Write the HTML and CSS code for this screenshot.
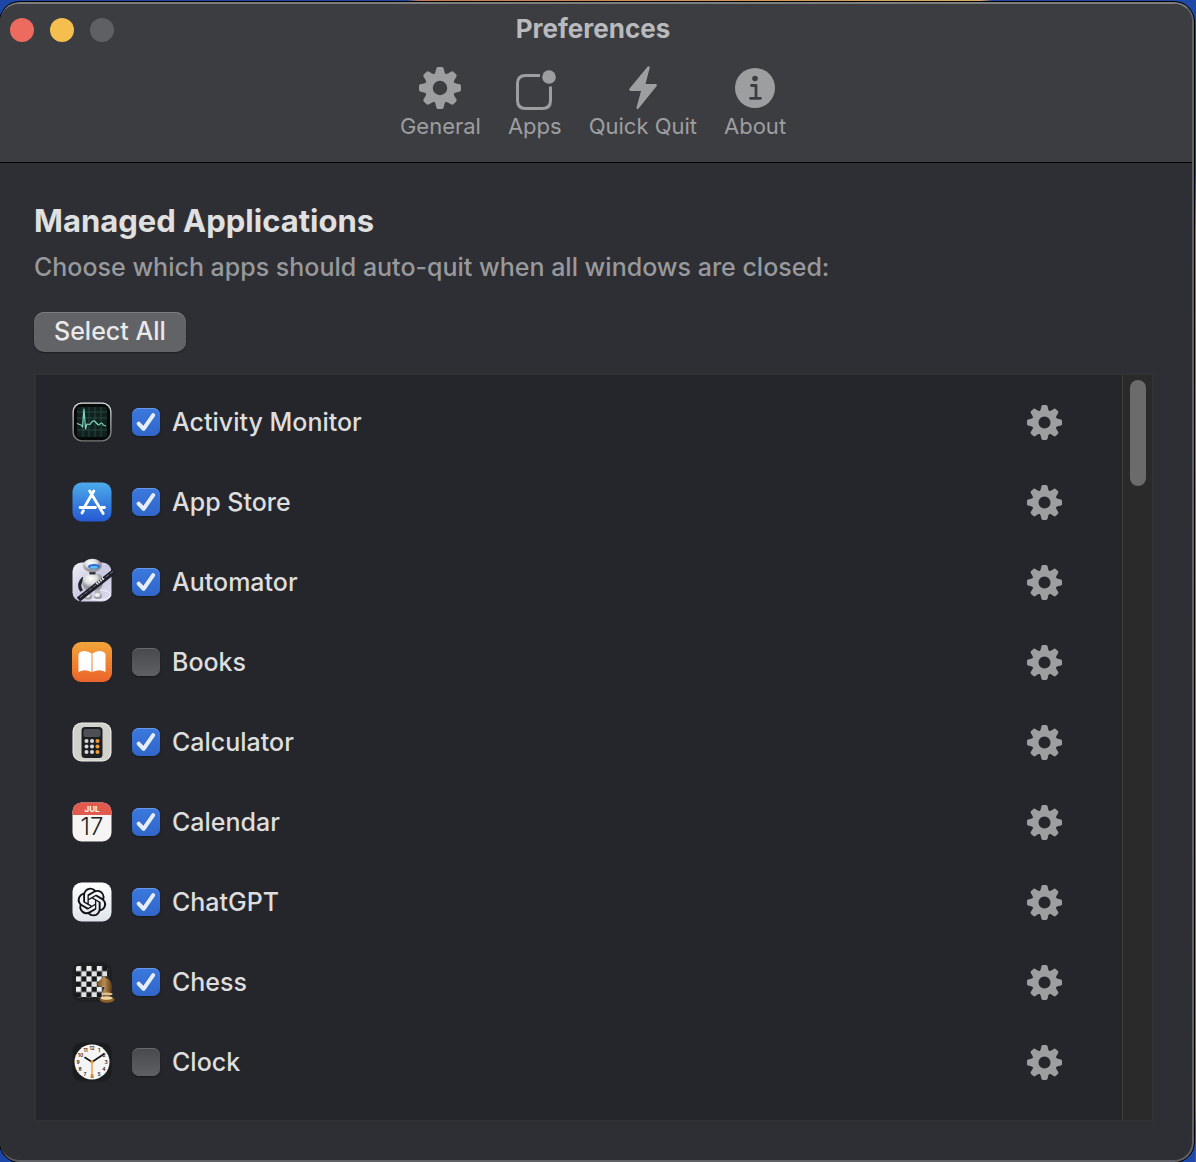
FILE: index.html
```html
<!DOCTYPE html>
<html lang="en">
<head>
    <meta charset="UTF-8">
    <meta name="viewport" content="width=device-width, initial-scale=1.0">
    <title>Preferences</title>
    <link rel="stylesheet" href="styles.css">
</head>
<body>
    <!-- shared shapes -->
    <svg class="defs" width="0" height="0" aria-hidden="true">
        <defs>
            <path id="tooth" d="M13.5 8C15.6 6.5 15.8 4.5 16.3 2.2C16.7 .6 17.2 0 18.4 0H21.6C22.8 0 23.3 .6 23.7 2.2C24.2 4.5 24.4 6.5 26.5 8Z"/>
        </defs>
        <symbol id="gear" viewBox="0 0 40 40">
            <circle cx="20" cy="20" r="10.6" fill="none" stroke="currentColor" stroke-width="7.4"/>
            <g fill="currentColor">
                <use href="#tooth"/>
                <use href="#tooth" transform="rotate(45 20 20)"/>
                <use href="#tooth" transform="rotate(90 20 20)"/>
                <use href="#tooth" transform="rotate(135 20 20)"/>
                <use href="#tooth" transform="rotate(180 20 20)"/>
                <use href="#tooth" transform="rotate(225 20 20)"/>
                <use href="#tooth" transform="rotate(270 20 20)"/>
                <use href="#tooth" transform="rotate(315 20 20)"/>
            </g>
        </symbol>
        <symbol id="check" viewBox="0 0 28 28">
            <path d="M6.6 15.6L11.6 20.8L21.2 7.2" fill="none" stroke="#e8effb" stroke-width="4" stroke-linecap="round" stroke-linejoin="round"/>
        </symbol>
    </svg>

    <div class="window">
        <header class="header">
            <div class="titlebar">
                <div class="lights">
                    <button type="button" class="light close" aria-label="Close"></button>
                    <button type="button" class="light minimize" aria-label="Minimize"></button>
                    <button type="button" class="light zoom" aria-label="Zoom" disabled></button>
                </div>
                <h1 class="title">Preferences</h1>
            </div>
            <nav class="toolbar">
                <button type="button" class="tab">
                    <svg class="tab-icon" viewBox="0 0 44 44"><use href="#gear" x="1" y="1" width="42" height="42"/></svg>
                    <span>General</span>
                </button>
                <button type="button" class="tab">
                    <svg class="tab-icon" viewBox="0 0 44 44">
                        <path d="M27 9.5H12.5Q4.500 9.500 4.500 17.500V34.500Q4.500 42.500 12.500 42.500H29.500Q37.500 42.500 37.500 34.500V20.500" fill="none" stroke="currentColor" stroke-width="3"/>
                        <circle cx="36" cy="11" r="6.800" fill="currentColor"/>
                    </svg>
                    <span>Apps</span>
                </button>
                <button type="button" class="tab">
                    <svg class="tab-icon" viewBox="0 0 44 44">
                        <path d="M26.500 .8Q28.500 -.6 28.800 1.500L24.500 18H34.500Q36.800 18.200 35.500 20.300L17.500 42.500Q15.600 44.200 15.500 41.800L20 25H9.500Q7.400 24.600 8.600 22.600Z" fill="currentColor"/>
                    </svg>
                    <span>Quick Quit</span>
                </button>
                <button type="button" class="tab">
                    <svg class="tab-icon" viewBox="0 0 44 44">
                        <circle cx="22" cy="22" r="20" fill="currentColor"/>
                        <circle cx="22" cy="12.500" r="2.800" fill="#3c3d40"/>
                        <path d="M18.500 19.500H23V32M17.500 32.300H27.500" fill="none" stroke="#3c3d40" stroke-width="2.800" stroke-linecap="round" stroke-linejoin="round"/>
                    </svg>
                    <span>About</span>
                </button>
            </nav>
        </header>

        <main class="content">
            <h2>Managed Applications</h2>
            <p class="hint">Choose which apps should auto-quit when all windows are closed:</p>
            <button type="button" class="select-all">Select All</button>

            <div class="list-box">
                <ul class="app-list">
                    <li class="app">
                        <svg class="app-icon" viewBox="0 0 40 40">
                            <defs>
                                <linearGradient id="rim" x2="0" y2="1"><stop stop-color="#e4eced"/><stop offset="1" stop-color="#777"/></linearGradient>
                            </defs>
                            <rect x=".5" y=".5" width="39" height="39" rx="9" fill="url(#rim)"/>
                            <rect x="1.800" y="1.800" width="36.400" height="36.400" rx="8" fill="#070909"/>
                            <rect x="5" y="5" width="30" height="30" rx="2" fill="#10211f"/>
                            <path d="M5 10H35M5 16H35M5 28H35M11 5V35M17 5V35M23 5V35M29 5V35" stroke="#2c5148" stroke-width=".8"/>
                            <path d="M5 21.500L9 23L10.500 25L12 7L13.500 27L15 22L18 22.500Q21 17 23.500 20T27 23Q30 19 31 23L34 24" fill="none" stroke="#7fd5bd" stroke-width="1.200" stroke-linejoin="round"/>
                        </svg>
                        <span class="box"><input type="checkbox" id="activity-monitor" checked><svg class="tick"><use href="#check"/></svg></span>
                        <label for="activity-monitor">Activity Monitor</label>
                        <button type="button" class="options" aria-label="Activity Monitor options"><svg viewBox="0 0 40 40"><use href="#gear"/></svg></button>
                    </li>
                    <li class="app">
                        <svg class="app-icon" viewBox="0 0 40 40">
                            <defs>
                                <linearGradient id="store" x2="0" y2="1"><stop stop-color="#4cabea"/><stop offset="1" stop-color="#2559d3"/></linearGradient>
                            </defs>
                            <rect x=".5" y=".5" width="39" height="39" rx="9" fill="url(#store)"/>
                            <path d="M21.800 9L12.500 25M17.700 9L31.200 31.500M8 25.500H23.500M28.500 25.500H32.500M11.300 28.800L10 31" fill="none" stroke="#fff" stroke-width="2.800" stroke-linecap="round"/>
                        </svg>
                        <span class="box"><input type="checkbox" id="app-store" checked><svg class="tick"><use href="#check"/></svg></span>
                        <label for="app-store">App Store</label>
                        <button type="button" class="options" aria-label="App Store options"><svg viewBox="0 0 40 40"><use href="#gear"/></svg></button>
                    </li>
                    <li class="app">
                        <svg class="app-icon" viewBox="0 0 40 40">
                            <defs>
                                <linearGradient id="auto" x2="1" y2="1"><stop stop-color="#f1f1f8"/><stop offset=".5" stop-color="#c9c9e4"/><stop offset="1" stop-color="#dcdcf0"/></linearGradient>
                                <radialGradient id="robot" cx=".4" cy=".3"><stop stop-color="#fff"/><stop offset=".6" stop-color="#dcdde0"/><stop offset="1" stop-color="#96989e"/></radialGradient>
                            </defs>
                            <rect x=".5" y=".5" width="39" height="39" rx="9" fill="url(#auto)"/>
                            <ellipse cx="27" cy="33" rx="12" ry="5" fill="none" stroke="#f4f4ff"/>
                            <path d="M11.500 16Q5 22 9.500 29" fill="none" stroke="#24262d" stroke-width="3.200"/>
                            <path d="M16 26L15 33M25 26L26 33" stroke="#b5b7bd" stroke-width="5.500"/>
                            <ellipse cx="16" cy="34.500" rx="4" ry="3" fill="url(#robot)"/>
                            <ellipse cx="26" cy="34" rx="4" ry="3" fill="url(#robot)"/>
                            <rect x="10.500" y="11.500" width="20.500" height="17" rx="7" fill="url(#robot)"/>
                            <rect x="17.500" y="9" width="6" height="3.500" fill="#303238"/>
                            <ellipse cx="20.500" cy="3.500" rx="9.500" ry="6.800" fill="url(#robot)"/>
                            <ellipse cx="22" cy="4.500" rx="6" ry="2.600" fill="#2d6ccb"/>
                            <ellipse cx="22" cy="5.300" rx="4" ry="1.400" fill="#5fc1ff"/>
                            <path d="M6.500 37.500L42 9.500" stroke="#1e1f27" stroke-width="5.400"/>
                            <path d="M8 35.500L41 9.500" stroke="#7e8196" stroke-width="1" stroke-dasharray="4 1.500"/>
                            <path d="M24.500 22L32 15.500" stroke="#e7e8eb" stroke-width="2.800" stroke-dasharray="1.500 1"/>
                        </svg>
                        <span class="box"><input type="checkbox" id="automator" checked><svg class="tick"><use href="#check"/></svg></span>
                        <label for="automator">Automator</label>
                        <button type="button" class="options" aria-label="Automator options"><svg viewBox="0 0 40 40"><use href="#gear"/></svg></button>
                    </li>
                    <li class="app">
                        <svg class="app-icon" viewBox="0 0 40 40">
                            <defs>
                                <linearGradient id="books" x2="0" y2="1"><stop stop-color="#f2a53a"/><stop offset="1" stop-color="#eb642b"/></linearGradient>
                            </defs>
                            <rect width="40" height="40" rx="9" fill="url(#books)"/>
                            <path d="M19.500 11.500Q16.500 9 12.500 9Q9 9 7.300 10.800Q6.500 11.500 6.500 13V30Q12.500 26.500 19.500 30Z" fill="#fff"/>
                            <path d="M20.500 11.500Q23.500 9 27.500 9Q31 9 32.700 10.800Q33.500 11.500 33.500 13V30Q27.500 26.500 20.500 30Z" fill="#fff"/>
                        </svg>
                        <span class="box"><input type="checkbox" id="books-app"><svg class="tick"><use href="#check"/></svg></span>
                        <label for="books-app">Books</label>
                        <button type="button" class="options" aria-label="Books options"><svg viewBox="0 0 40 40"><use href="#gear"/></svg></button>
                    </li>
                    <li class="app">
                        <svg class="app-icon" viewBox="0 0 40 40">
                            <rect x=".5" y=".5" width="39" height="39" rx="9" fill="#efeee9"/>
                            <rect x="1.500" y="1.500" width="37" height="37" rx="8" fill="#d2d2cd"/>
                            <rect x="9.500" y="5" width="21" height="31" rx="3.500" fill="#1c1e22"/>
                            <rect x="11.500" y="7" width="17" height="8" rx="2" fill="#4d5156"/>
                            <g fill="#d8d9da">
                                <circle cx="14.500" cy="19" r="2"/><circle cx="20" cy="19" r="2"/>
                                <circle cx="14.500" cy="24.500" r="2"/><circle cx="20" cy="24.500" r="2"/>
                                <circle cx="14.500" cy="30" r="2"/><circle cx="20" cy="30" r="2"/>
                            </g>
                            <g fill="#f09a32">
                                <circle cx="25.500" cy="19" r="2"/><circle cx="25.500" cy="24.500" r="2"/><circle cx="25.500" cy="30" r="2"/>
                            </g>
                        </svg>
                        <span class="box"><input type="checkbox" id="calculator" checked><svg class="tick"><use href="#check"/></svg></span>
                        <label for="calculator">Calculator</label>
                        <button type="button" class="options" aria-label="Calculator options"><svg viewBox="0 0 40 40"><use href="#gear"/></svg></button>
                    </li>
                    <li class="app">
                        <svg class="app-icon" viewBox="0 0 40 40">
                            <rect x=".5" y=".5" width="39" height="39" rx="9" fill="#f6f5f3"/>
                            <path d="M.5 13V9.500A9 9 0 0 1 9.500 .5H30.500A9 9 0 0 1 39.500 9.500V13Z" fill="#e2594d"/>
                            <text class="cal-month" x="20" y="9.500">JUL</text>
                            <text class="cal-day" x="20" y="33">17</text>
                        </svg>
                        <span class="box"><input type="checkbox" id="calendar" checked><svg class="tick"><use href="#check"/></svg></span>
                        <label for="calendar">Calendar</label>
                        <button type="button" class="options" aria-label="Calendar options"><svg viewBox="0 0 40 40"><use href="#gear"/></svg></button>
                    </li>
                    <li class="app">
                        <svg class="app-icon" viewBox="0 0 40 40">
                            <defs>
                                <linearGradient id="gpt" x2="0" y2="1"><stop stop-color="#fff"/><stop offset="1" stop-color="#dfe5ec"/></linearGradient>
                            </defs>
                            <rect x=".5" y=".5" width="39" height="39" rx="9" fill="url(#gpt)"/>
                            <path transform="translate(5.600 5.800) scale(1.190)" fill="#101214" d="M22.2819 9.8211a5.9847 5.9847 0 0 0-.5157-4.9108 6.0462 6.0462 0 0 0-6.5098-2.9A6.0651 6.0651 0 0 0 4.9807 4.1818a5.9847 5.9847 0 0 0-3.9977 2.9 6.0462 6.0462 0 0 0 .7427 7.0966 5.98 5.98 0 0 0 .511 4.9107 6.051 6.051 0 0 0 6.5146 2.9001A5.9847 5.9847 0 0 0 13.2599 24a6.0557 6.0557 0 0 0 5.7718-4.2058 5.9894 5.9894 0 0 0 3.9977-2.9001 6.0557 6.0557 0 0 0-.7475-7.0729zm-9.022 12.6081a4.4755 4.4755 0 0 1-2.8764-1.0408l.1419-.0804 4.7783-2.7582a.7948.7948 0 0 0 .3927-.6813v-6.7369l2.02 1.1686a.071.071 0 0 1 .038.052v5.5826a4.504 4.504 0 0 1-4.4945 4.4944zm-9.6607-4.1254a4.4708 4.4708 0 0 1-.5346-3.0137l.142.0852 4.783 2.7582a.7712.7712 0 0 0 .7806 0l5.8428-3.3685v2.3324a.0804.0804 0 0 1-.0332.0615L9.74 19.9502a4.4992 4.4992 0 0 1-6.1408-1.6464zM2.3408 7.8956a4.485 4.485 0 0 1 2.3655-1.9728V11.6a.7664.7664 0 0 0 .3879.6765l5.8144 3.3543-2.0201 1.1685a.0757.0757 0 0 1-.071 0l-4.8303-2.7865A4.504 4.504 0 0 1 2.3408 7.872zm16.5963 3.8558L13.1038 8.364 15.1192 7.2a.0757.0757 0 0 1 .071 0l4.8303 2.7913a4.4944 4.4944 0 0 1-.6765 8.1042v-5.6772a.79.79 0 0 0-.407-.667zm2.0107-3.0231l-.142-.0852-4.7735-2.7818a.7759.7759 0 0 0-.7854 0L9.409 9.2297V6.8974a.0662.0662 0 0 1 .0284-.0615l4.8303-2.7866a4.4992 4.4992 0 0 1 6.6802 4.66zM8.3065 12.863l-2.02-1.1638a.0804.0804 0 0 1-.038-.0567V6.0742a4.4992 4.4992 0 0 1 7.3757-3.4537l-.142.0805L8.704 5.459a.7948.7948 0 0 0-.3927.6813zm1.0976-2.3654l2.602-1.4998 2.6069 1.4998v2.9994l-2.5974 1.4997-2.6067-1.4997Z"/>
                        </svg>
                        <span class="box"><input type="checkbox" id="chatgpt" checked><svg class="tick"><use href="#check"/></svg></span>
                        <label for="chatgpt">ChatGPT</label>
                        <button type="button" class="options" aria-label="ChatGPT options"><svg viewBox="0 0 40 40"><use href="#gear"/></svg></button>
                    </li>
                    <li class="app">
                        <svg class="app-icon" viewBox="0 0 40 40">
                            <defs>
                                <pattern id="board" x="4" y="4" width="10.400" height="10.400" patternUnits="userSpaceOnUse">
                                    <rect width="10.400" height="10.400" fill="#17181b"/>
                                    <rect width="5.200" height="5.200" fill="#eceded"/>
                                    <rect x="5.200" y="5.200" width="5.200" height="5.200" fill="#e0e1e1"/>
                                </pattern>
                                <linearGradient id="wood"><stop stop-color="#6e4b22"/><stop offset=".5" stop-color="#b98b50"/><stop offset="1" stop-color="#5c3a17"/></linearGradient>
                            </defs>
                            <rect x=".5" y=".5" width="39" height="39" rx="9" fill="#1b1c1e"/>
                            <rect x="2.500" y="2.500" width="35" height="35" rx="6" fill="none" stroke="#38393b" stroke-dasharray="1 2"/>
                            <rect x="4" y="4" width="31.200" height="31.200" rx="2" fill="url(#board)"/>
                            <path d="M24.500 21.500L30 16L32 14L34 16Q40 18 40 25Q40 29 38.500 32H31Q30.500 28 33 24L26.500 24.500Z" fill="url(#wood)"/>
                            <path d="M30 31.500H40L38.500 35H31.500Z" fill="#1c130b"/>
                            <ellipse cx="35" cy="32" rx="5.500" ry="1.500" fill="#dfc08a"/>
                            <ellipse cx="35" cy="37.500" rx="7.300" ry="3.300" fill="#8e6027"/>
                            <ellipse cx="34.500" cy="36" rx="6" ry="1.700" fill="#f0d6a0"/>
                        </svg>
                        <span class="box"><input type="checkbox" id="chess" checked><svg class="tick"><use href="#check"/></svg></span>
                        <label for="chess">Chess</label>
                        <button type="button" class="options" aria-label="Chess options"><svg viewBox="0 0 40 40"><use href="#gear"/></svg></button>
                    </li>
                    <li class="app">
                        <svg class="app-icon" viewBox="0 0 40 40">
                            <rect x=".5" y=".5" width="39" height="39" rx="9" fill="#1b1c1d"/>
                            <circle cx="20" cy="20" r="17.500" fill="#f5f5f5"/>
                            <g class="clock-num">
                                <text x="20" y="8">12</text><text x="27" y="10">1</text><text x="32" y="14.500">2</text>
                                <text x="34" y="21.500">3</text><text x="32" y="28.500">4</text><text x="27" y="33.500">5</text>
                                <text x="20" y="35.500">6</text><text x="13" y="33.500">7</text><text x="8" y="28.500">8</text>
                                <text x="6" y="21.500">9</text><text x="8.500" y="14.500">10</text><text x="13.500" y="10">11</text>
                            </g>
                            <path d="M20 20L13 15.500M20 20L32 12" stroke="#151515" stroke-width="1.600" stroke-linecap="round"/>
                            <path d="M20 18V35" stroke="#ef9a3c" stroke-width="1.400"/>
                            <circle cx="20" cy="20" r="1.600" fill="#ef9a3c"/>
                        </svg>
                        <span class="box"><input type="checkbox" id="clock"><svg class="tick"><use href="#check"/></svg></span>
                        <label for="clock">Clock</label>
                        <button type="button" class="options" aria-label="Clock options"><svg viewBox="0 0 40 40"><use href="#gear"/></svg></button>
                    </li>
                </ul>
                <div class="scrollbar"><div class="thumb"></div></div>
            </div>
        </main>
    </div>
</body>
</html>
```
FILE: styles.css
```css
* {
    box-sizing: border-box;
}
body {
    margin: 0;
    padding: 2px 2px 0 0;
    height: 100vh;
    font-family: Inter, "Liberation Sans", sans-serif;
    background:
        linear-gradient(#1f48a8 15%, #b0704a 20%, #8a6a50 95%, #5c4f86 97%) right / 1px 100% no-repeat,
        linear-gradient(90deg, #1c47a6 34%, #c47a55 35%, #d8a862 82%, #1f48a8 83%);
}
.defs {
    display: none;
}
button {
    font-family: inherit;
    padding: 0;
    border: none;
    background: none;
    cursor: pointer;
}
.window {
    height: 100%;
    display: flex;
    flex-direction: column;
    border: 2px solid #606164;
    border-top-color: #7c7d7d;
    border-left: none;
    border-radius: 20px;
    background-color: #2e2f34;
    box-shadow: 0 0 0 1px #000;
    overflow: hidden;
}
.header {
    flex: none;
    height: 159px;
    padding-right: 6px;
    background-color: #3c3d40;
    border-bottom: 1px solid #000;
}
.titlebar {
    display: grid;
    grid-template-columns: 1fr auto 1fr;
    align-items: center;
    height: 52px;
    padding: 0 10px;
}
.lights {
    display: flex;
    gap: 16px;
}
.light {
    width: 24px;
    height: 24px;
    border-radius: 50%;
}
.close {
    background-color: #ed6a5f;
}
.minimize {
    background-color: #f5bf4f;
}
.zoom {
    background-color: #5f6063;
}
.title {
    margin: 0;
    padding-bottom: 2px;
    font-size: 26px;
    line-height: 32px;
    font-weight: 700;
    color: #b9babd;
}
.toolbar {
    display: flex;
    justify-content: center;
    gap: 27px;
    padding-top: 10px;
}
.tab {
    display: flex;
    flex-direction: column;
    align-items: center;
    gap: 2px;
    font-size: 22px;
    line-height: 28px;
    color: #9d9ea0;
}
.tab-icon {
    width: 44px;
    height: 44px;
    overflow: visible;
}
.content {
    flex: 1;
    display: flex;
    flex-direction: column;
    align-items: flex-start;
    padding: 38px 38px 38px 34px;
}
h2 {
    margin: 0;
    font-size: 31px;
    line-height: 40px;
    font-weight: 700;
    color: #e0e0e0;
}
.hint {
    margin: 10px 0 29px;
    font-size: 25px;
    line-height: 32px;
    font-weight: 500;
    color: #98999c;
}
.select-all {
    height: 40px;
    padding: 0 20px 2px;
    border-radius: 10px;
    font-size: 25px;
    font-weight: 500;
    color: #e9e9ea;
    background-color: #626366;
    box-shadow: inset 0 1px 0 #7b7c7f, 0 1px 2px rgba(0, 0, 0, 0.4);
}
.list-box {
    flex: 1;
    align-self: stretch;
    display: flex;
    margin-top: 21px;
    border: 2px solid #313234;
    background-color: #25262b;
}
.app-list {
    flex: 1;
    margin: 0;
    padding: 7px 60px 0 36px;
    list-style: none;
}
.app {
    display: flex;
    align-items: center;
    height: 80px;
    font-size: 25px;
    font-weight: 500;
    color: #dedede;
}
.app-icon {
    width: 40px;
    height: 40px;
    margin-right: 20px;
    overflow: visible;
}
.box {
    display: grid;
    margin-right: 12px;
}
.box input,
.tick {
    grid-area: 1 / 1;
    width: 28px;
    height: 28px;
    margin: 0;
}
.box input {
    appearance: none;
    border-radius: 7px;
    background: linear-gradient(#48494c, #5f6063);
    box-shadow: inset 0 1px 0 #67686b, 0 1px 2px rgba(0, 0, 0, 0.4);
}
.box input:checked {
    background: linear-gradient(#3b78de, #3067c9);
    box-shadow: inset 0 1px 0 #6896e4, 0 1px 2px rgba(0, 0, 0, 0.4);
}
.tick {
    pointer-events: none;
}
.box input:not(:checked) + .tick {
    visibility: hidden;
}
.options {
    width: 35px;
    height: 35px;
    margin-left: auto;
    color: #9d9ea0;
}
.options svg {
    display: block;
    width: 35px;
    height: 35px;
}
.scrollbar {
    width: 30px;
    padding: 5px 5px 0 7px;
    border-left: 1px solid #3c3d3f;
    background-color: #2a2a2b;
}
.thumb {
    width: 16px;
    height: 106px;
    border-radius: 8px;
    background-color: #6b6b6b;
}
.cal-month {
    font-size: 8px;
    font-weight: 700;
    fill: #fff;
    text-anchor: middle;
}
.cal-day {
    font-size: 24px;
    font-weight: 300;
    fill: #222;
    text-anchor: middle;
}
.clock-num {
    font-size: 5px;
    font-weight: 600;
    fill: #222;
    text-anchor: middle;
}
```
